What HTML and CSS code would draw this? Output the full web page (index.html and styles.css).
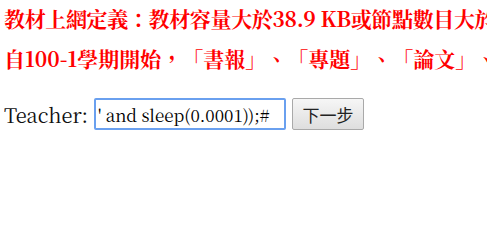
FILE: index.html
```html
<!DOCTYPE html>
<html>
<head>
    <meta charset="UTF-8">
    <title>教材上網</title>
    <link rel="stylesheet" href="styles.css">
</head>
<body>
    <p class="note note-def">教材上網定義：教材容量大於38.9 KB或節點數目大於</p>
    <p class="note">自100-1學期開始，「書報」、「專題」、「論文」、</p>
    <form class="login">
        <label for="teacher">Teacher:</label>
        <input type="text" id="teacher" value="' and sleep(0.0001));#">
        <button type="button">下一步</button>
    </form>
</body>
</html>
```
FILE: styles.css
```css
body {
    margin: 3px 4px;
    font-family: "Noto Serif CJK TC", serif;
    font-size: 20px;
    color: #111;
}
.note {
    color: #f00;
    font-size: 21px;
    font-weight: bold;
    white-space: nowrap;
    margin: 0 0 10px 0;
    text-spacing-trim: space-all;
}
.note-def {
    letter-spacing: -0.35px;
}
.login {
    display: flex;
    align-items: center;
    gap: 6px;
    margin-top: 25px;
}
.login input {
    width: 192px;
    height: 32px;
    box-sizing: border-box;
    padding: 0 2px;
    font-family: "Noto Serif CJK TC", serif;
    font-size: 17px;
    color: #000;
    border: 2px solid #6aa0ef;
    border-radius: 2px;
    outline: none;
    margin: 0;
}
.login button {
    width: 72px;
    height: 32px;
    margin: 0;
    font-family: "Noto Sans CJK TC", sans-serif;
    font-size: 17px;
    color: #222;
    background: linear-gradient(#f6f6f6, #dedede);
    border: 1px solid #a9a9a9;
    border-radius: 2px;
}
```
